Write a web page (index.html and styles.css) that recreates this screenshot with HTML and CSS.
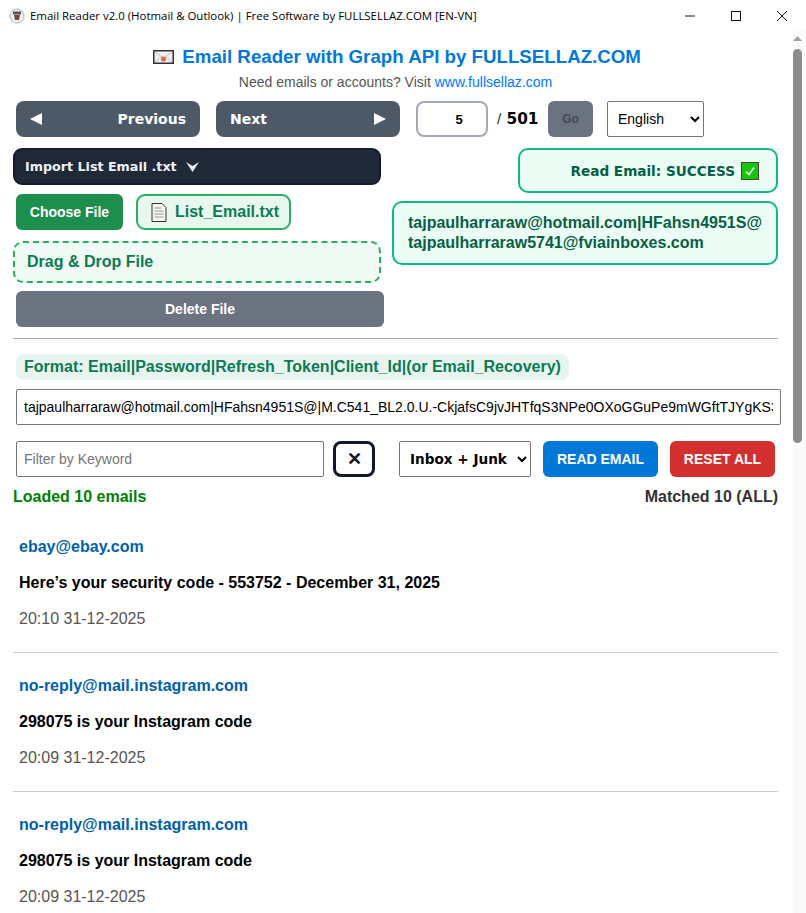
FILE: index.html
```html
<!DOCTYPE html>
<html>
  <head>
    <meta charset="utf-8">
    <title>Email Reader v2.0</title>
    <link rel="stylesheet" href="styles.css">
  </head>
  <body>
    <div class="titlebar">
      <svg class="favicon" width="16" height="16" viewBox="0 0 16 16">
        <circle cx="8" cy="8" r="7" fill="#f4f1ea" stroke="#9fb6c6"/>
        <rect x="4" y="3.500" width="8" height="3" fill="#555"/>
        <path d="M5 7h6l-1 5H6z" fill="#7a4a30"/>
      </svg>
      <span class="titlebar-text">Email Reader v2.0 (Hotmail &amp; Outlook) | Free Software by FULLSELLAZ.COM [EN-VN]</span>
      <div class="window-btns">
        <svg width="46" height="30" viewBox="0 0 46 30"><path d="M18 15h10" stroke="#111" fill="none"/></svg>
        <svg width="46" height="30" viewBox="0 0 46 30"><rect x="18.500" y="10.500" width="9" height="9" stroke="#111" fill="none"/></svg>
        <svg width="46" height="30" viewBox="0 0 46 30"><path d="M18 10l10 10M28 10l-10 10" stroke="#111" fill="none"/></svg>
      </div>
    </div>

    <div class="window">
      <div class="content">
        <h1>
          <svg class="mail-icon" width="21" height="14" viewBox="0 0 21 14">
            <rect x="0.750" y="0.750" width="19.500" height="12.500" fill="#f0eeee" stroke="#333" stroke-width="1.500"/>
            <path d="M2 2l8.500 6L19 2M2 12l6-5M19 12l-6-5" fill="none" stroke="#c4c4c4"/>
            <circle cx="10.500" cy="9" r="2.500" fill="#e0605a"/>
          </svg>
          Email Reader with Graph API by FULLSELLAZ.COM
        </h1>
        <p class="subtitle">Need emails or accounts? Visit <a href="#">www.fullsellaz.com</a></p>

        <div class="nav-row">
          <button class="nav-btn">
            <svg width="12" height="12" viewBox="0 0 12 12"><path d="M0 6l12-6v12z" fill="#fff"/></svg>
            <span>Previous</span>
          </button>
          <button class="nav-btn">
            <span>Next</span>
            <svg width="12" height="12" viewBox="0 0 12 12"><path d="M12 6L0 0v12z" fill="#fff"/></svg>
          </button>
          <input class="page-input" type="text" value="5">
          <span class="page-total"><i>/</i> 501</span>
          <button class="go-btn">Go</button>
          <select class="lang-select"><option>English</option></select>
        </div>

        <div class="import-grid">
          <div class="import-left">
            <div class="import-head">Import List Email .txt
              <svg width="13" height="11" viewBox="0 0 13 11"><path d="M0 1l6.500 4L13 1 6.500 11z" fill="#e8edf2"/></svg>
            </div>
            <div class="file-row">
              <button class="choose-btn">Choose File</button>
              <div class="file-chip">
                <svg width="16" height="19" viewBox="0 0 16 19">
                  <path d="M1 .5h10l4 4v14H1z" fill="#f4f4f4" stroke="#333"/>
                  <path d="M3.500 5h7M3.500 8h9M3.500 11h9M3.500 14h9" stroke="#999"/>
                </svg>
                List_Email.txt
              </div>
            </div>
            <div class="drop-zone">Drag &amp; Drop File</div>
            <button class="delete-btn">Delete File</button>
          </div>
          <div class="import-right">
            <div class="status-box">Read Email: SUCCESS
              <span class="check-mark">
                <svg width="12" height="12" viewBox="0 0 12 12"><path d="M2 6.500l3 3 5-7" fill="none" stroke="#fff" stroke-width="1.500"/></svg>
              </span>
            </div>
            <div class="account-box">tajpaulharraraw@hotmail.com|HFahsn4951S@<br>tajpaulharraraw5741@fviainboxes.com</div>
          </div>
        </div>

        <hr class="divider">

        <div class="format-label">Format: Email|Password|Refresh_Token|Client_Id|(or Email_Recovery)</div>
        <input class="account-input" type="text" value="tajpaulharraraw@hotmail.com|HFahsn4951S@|M.C541_BL2.0.U.-CkjafsC9jvJHTfqS3NPe0OXoGGuPe9mWGftTJYgKS3xQ">

        <div class="filter-row">
          <input class="filter-input" type="text" placeholder="Filter by Keyword">
          <button class="clear-btn">✕</button>
          <select class="folder-select"><option>Inbox + Junk</option></select>
          <button class="read-btn">READ EMAIL</button>
          <button class="reset-btn">RESET ALL</button>
        </div>

        <div class="status-row">
          <span class="loaded">Loaded 10 emails</span>
          <span class="matched">Matched 10 (ALL)</span>
        </div>

        <div class="mail-list">
          <div class="mail-item">
            <div class="mail-from">ebay@ebay.com</div>
            <div class="mail-subject">Here’s your security code - 553752 - December 31, 2025</div>
            <div class="mail-time">20:10 31-12-2025</div>
          </div>
          <div class="mail-item">
            <div class="mail-from">no-reply@mail.instagram.com</div>
            <div class="mail-subject">298075 is your Instagram code</div>
            <div class="mail-time">20:09 31-12-2025</div>
          </div>
          <div class="mail-item">
            <div class="mail-from">no-reply@mail.instagram.com</div>
            <div class="mail-subject">298075 is your Instagram code</div>
            <div class="mail-time">20:09 31-12-2025</div>
          </div>
        </div>
      </div>

      <div class="scrollbar">
        <svg class="scroll-up" width="13" height="10" viewBox="0 0 13 10"><path d="M0 7l4.500-5L9 7z" fill="#a0a0a0"/></svg>
        <div class="scroll-thumb"></div>
      </div>
    </div>
  </body>
</html>
```

FILE: styles.css
```css
* {box-sizing: border-box;}

html, body {
  height: 913px;
  overflow: hidden;
}

body {
  margin: 0;
  font-family: "Liberation Sans", Arial, sans-serif;
  background-color: #fff;
  color: #000;
}

button, input, select {
  font-family: "Liberation Sans", Arial, sans-serif;
}

/* window frame */
.titlebar {
  display: flex;
  align-items: center;
  height: 31px;
  padding-left: 9px;
}

.favicon {margin-right: 5px;}

.titlebar-text {
  font-family: "Open Sans", "DejaVu Sans", sans-serif;
  font-size: 11.45px;
  flex: 1;
  white-space: nowrap;
}

.window-btns {
  display: flex;
  margin-right: 1px;
}

.window {
  display: flex;
  height: 882px;
}

.content {
  width: 793px;
  padding: 0 15px 0 13px;
  overflow: hidden;
}

.scrollbar {
  width: 13px;
  background-color: #fafafa;
}

.scroll-up {display: block; margin-top: 3px;}

.scroll-thumb {
  width: 9px;
  height: 394px;
  margin-top: 5px;
  border-radius: 5px;
  background-color: #8c8c8c;
}

/* header */
h1 {
  margin: 14px 0 0 0;
  padding-left: 3px;
  height: 24px;
  font-size: 18.72px;
  line-height: 24px;
  font-weight: bold;
  color: #0078d7;
  text-align: center;
}

.mail-icon {
  vertical-align: -1px;
  margin-right: 3px;
}

.subtitle {
  margin: 5px 0 0 0;
  font-size: 14px;
  line-height: 16px;
  color: #555;
  text-align: center;
}

.subtitle a {color: #0078ff; text-decoration: none;}

/* paging */
.nav-row {
  display: flex;
  align-items: center;
  height: 36px;
  margin: 11px 0 0 3px;
}

.nav-btn {
  display: flex;
  justify-content: space-between;
  align-items: center;
  width: 184px;
  height: 36px;
  margin-right: 16px;
  padding: 0 14px;
  border: none;
  border-radius: 8px;
  background-color: #4e5968;
  color: #fff;
  font-family: "DejaVu Sans", sans-serif;
  font-size: 14px;
  font-weight: bold;
}

.page-input {
  width: 72px;
  height: 36px;
  padding: 0 0 0 14px;
  border: 2px solid #a3a9b5;
  border-radius: 8px;
  text-align: center;
  font-size: 13px;
  font-weight: bold;
  color: #000;
  outline: none;
}

.page-total {
  width: 60px;
  padding-left: 9px;
  font-family: "DejaVu Sans", sans-serif;
  font-size: 15.3px;
  font-weight: bold;
  white-space: nowrap;
}

.page-total i {
  font-family: "Liberation Sans", sans-serif;
  font-style: normal;
  font-weight: normal;
  color: #333;
}

.go-btn {
  width: 45px;
  height: 36px;
  margin-right: 14px;
  border: none;
  border-radius: 6px;
  background-color: #6b7280;
  color: #444a55;
  font-size: 12px;
  font-weight: bold;
}

.lang-select {
  width: 97px;
  height: 36px;
  padding-left: 6px;
  border: 1px solid #767676;
  border-radius: 2px;
  background-color: #fff;
  color: #000;
  font-size: 14px;
}

/* import block */
.import-grid {
  display: flex;
  justify-content: space-between;
  margin-top: 11px;
}

.import-left {width: 371px;}

.import-head {
  display: flex;
  align-items: center;
  gap: 9px;
  width: 368px;
  height: 37px;
  padding-left: 10px;
  border: 2px solid #141c2b;
  border-radius: 9px;
  background-color: #1f2937;
  color: #eef1f5;
  font-family: "DejaVu Sans", sans-serif;
  font-size: 12.7px;
  font-weight: bold;
}

.file-row {
  display: flex;
  gap: 13px;
  margin: 9px 0 0 3px;
}

.choose-btn {
  width: 107px;
  height: 36px;
  border: none;
  border-radius: 6px;
  background-color: #1e8e4e;
  color: #fff;
  font-size: 14px;
  font-weight: bold;
}

.file-chip {
  display: flex;
  align-items: center;
  gap: 8px;
  width: 155px;
  height: 36px;
  padding-left: 13px;
  border: 2px solid #27ae60;
  border-radius: 9px;
  background-color: #e8f8ef;
  color: #0b7a55;
  font-size: 16px;
  font-weight: bold;
  white-space: nowrap;
}

.drop-zone {
  width: 368px;
  height: 42px;
  margin-top: 11px;
  padding-left: 12px;
  border: 2px dashed #27ae60;
  border-radius: 10px;
  background-color: #f1fbf5;
  color: #0b7a55;
  font-size: 16px;
  font-weight: bold;
  line-height: 37px;
}

.delete-btn {
  display: block;
  width: 368px;
  height: 36px;
  margin: 8px 0 0 3px;
  border: none;
  border-radius: 6px;
  background-color: #6b7280;
  color: #fff;
  font-size: 14px;
  font-weight: bold;
}

.import-right {
  display: flex;
  flex-direction: column;
  align-items: flex-end;
  width: 386px;
}

.status-box {
  display: flex;
  align-items: center;
  justify-content: flex-end;
  width: 260px;
  height: 45px;
  padding-right: 17px;
  border: 2px solid #10b981;
  border-radius: 10px;
  background-color: #ecfdf5;
  color: #065f46;
  font-family: "DejaVu Sans", sans-serif;
  font-size: 13.6px;
  font-weight: bold;
}

.check-mark {
  display: flex;
  align-items: center;
  justify-content: center;
  width: 18px;
  height: 18px;
  margin-left: 6px;
  border: 1px solid #444;
  background-color: #16c60c;
}

.account-box {
  width: 386px;
  height: 64px;
  margin-top: 8px;
  padding: 10px 14px;
  border: 2px solid #10b981;
  border-radius: 10px;
  background-color: #ecfdf5;
  color: #065f46;
  font-size: 16px;
  font-weight: bold;
  line-height: 20px;
  white-space: nowrap;
}

.divider {
  height: 1px;
  margin: 11px 0 0 0;
  border: none;
  background-color: #aaa;
}

/* account input */
.format-label {
  display: inline-block;
  height: 26px;
  margin: 15px 0 0 3px;
  padding: 0 8px;
  border-radius: 8px;
  background-color: #e8f5ee;
  color: #0b7a55;
  font-size: 16px;
  font-weight: bold;
  line-height: 25px;
}

.account-input {
  display: block;
  width: 765px;
  height: 36px;
  margin: 9px 0 0 3px;
  padding: 0 7px;
  border: 1px solid #767676;
  border-radius: 2px;
  color: #000;
  font-size: 14px;
  outline: none;
}

.filter-row {
  display: flex;
  align-items: center;
  height: 36px;
  margin: 16px 0 0 3px;
}

.filter-input {
  width: 308px;
  height: 36px;
  padding: 0 7px;
  border: 1px solid #767676;
  border-radius: 2px;
  font-size: 14px;
  outline: none;
}

.filter-input::placeholder {color: #757575;}

.clear-btn {
  width: 42px;
  height: 36px;
  margin: 0 24px 0 9px;
  padding: 0;
  border: 3px solid #111827;
  border-radius: 8px;
  background-color: #fff;
  color: #111827;
  font-size: 18px;
  font-weight: bold;
}

.folder-select {
  width: 132px;
  height: 36px;
  margin-right: 12px;
  padding-left: 6px;
  border: 1px solid #767676;
  border-radius: 2px;
  background-color: #fff;
  color: #000;
  font-family: "DejaVu Sans", sans-serif;
  font-size: 13.6px;
  font-weight: bold;
}

.read-btn, .reset-btn {
  height: 36px;
  border: none;
  border-radius: 6px;
  color: #fff;
  font-size: 14px;
  font-weight: bold;
}

.read-btn {
  width: 115px;
  margin-right: 12px;
  background-color: #0078d7;
}

.reset-btn {
  width: 105px;
  background-color: #d32f2f;
}

.status-row {
  display: flex;
  justify-content: space-between;
  margin-top: 11px;
  font-size: 16px;
  font-weight: bold;
  line-height: 18px;
}

.loaded {color: #008000;}
.matched {color: #333;}

/* email list */
.mail-list {margin-top: 8px;}

.mail-item {
  height: 139px;
  padding: 24px 6px 0 6px;
  border-bottom: 1px solid #ccc;
}

.mail-from {
  font-size: 16px;
  font-weight: bold;
  line-height: 18px;
  color: #0060a8;
}

.mail-subject {
  margin-top: 18px;
  font-size: 16px;
  font-weight: bold;
  line-height: 18px;
  color: #000;
}

.mail-time {
  margin-top: 18px;
  font-size: 16px;
  line-height: 18px;
  color: #555;
}
```
